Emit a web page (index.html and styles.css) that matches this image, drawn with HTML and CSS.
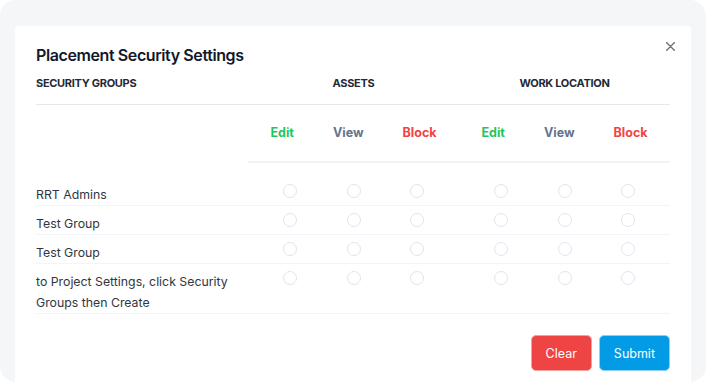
FILE: index.html
```html
<!DOCTYPE html>
<html lang="en">
<head>
<meta charset="utf-8">
<title>Placement Security Settings</title>
<link rel="stylesheet" href="styles.css">
</head>
<body>
<div class="backdrop">
  <div class="modal">
    <button class="close" aria-label="Close">
      <svg width="9" height="9" viewBox="0 0 9 9"><path d="M0.5 0.5 L8.5 8.5 M8.5 0.5 L0.5 8.5" stroke="#6b7280" stroke-width="1.4" stroke-linecap="round" fill="none"/></svg>
    </button>
    <h1 class="title">Placement Security Settings</h1>

    <div class="grid head">
      <div class="head-cell left">SECURITY GROUPS</div>
      <div class="head-cell">ASSETS</div>
      <div class="head-cell">WORK LOCATION</div>
    </div>

    <div class="grid sub">
      <div></div>
      <div class="sub-group">
        <span class="edit">Edit</span><span class="view">View</span><span class="block">Block</span>
      </div>
      <div class="sub-group">
        <span class="edit">Edit</span><span class="view">View</span><span class="block">Block</span>
      </div>
    </div>

    <div class="rows">
      <div class="grid row">
        <div class="name">RRT Admins</div>
        <div class="radios"><input type="radio" name="a1"><input type="radio" name="a1"><input type="radio" name="a1"></div>
        <div class="radios"><input type="radio" name="w1"><input type="radio" name="w1"><input type="radio" name="w1"></div>
      </div>
      <div class="grid row">
        <div class="name">Test Group</div>
        <div class="radios"><input type="radio" name="a2"><input type="radio" name="a2"><input type="radio" name="a2"></div>
        <div class="radios"><input type="radio" name="w2"><input type="radio" name="w2"><input type="radio" name="w2"></div>
      </div>
      <div class="grid row">
        <div class="name">Test Group</div>
        <div class="radios"><input type="radio" name="a3"><input type="radio" name="a3"><input type="radio" name="a3"></div>
        <div class="radios"><input type="radio" name="w3"><input type="radio" name="w3"><input type="radio" name="w3"></div>
      </div>
      <div class="grid row">
        <div class="name">to Project Settings, click Security Groups then Create</div>
        <div class="radios"><input type="radio" name="a4"><input type="radio" name="a4"><input type="radio" name="a4"></div>
        <div class="radios"><input type="radio" name="w4"><input type="radio" name="w4"><input type="radio" name="w4"></div>
      </div>
    </div>

    <div class="actions">
      <button class="btn btn-clear">Clear</button>
      <button class="btn btn-submit">Submit</button>
    </div>
  </div>
</div>
</body>
</html>
```

FILE: styles.css
```css
* { box-sizing: border-box; }

html, body {
  margin: 0;
  padding: 0;
  background: #ffffff;
  font-family: Inter, "Noto Sans", "Liberation Sans", sans-serif;
}

.backdrop {
  height: 382px;
  background: #f5f6f8;
  border-radius: 16px;
  padding: 26px 15px 0;
  overflow: hidden;
}

.modal {
  position: relative;
  background: #ffffff;
  border-radius: 3px;
  padding: 17px 21px 40px;
  min-height: 400px;
}

.close {
  position: absolute;
  top: 16px;
  right: 16px;
  width: 9px;
  height: 9px;
  padding: 0;
  border: 0;
  background: none;
  display: flex;
}

.title {
  margin: 0;
  font-size: 16px;
  line-height: 24px;
  font-weight: 600;
  letter-spacing: -0.4px;
  color: #111827;
}

.grid {
  display: grid;
  grid-template-columns: 212px 1fr 1fr;
}

.head {
  padding: 8px 0 13px;
  border-bottom: 1px solid #e5e7eb;
}

.head-cell {
  font-size: 11px;
  line-height: 16px;
  font-weight: 700;
  letter-spacing: -0.3px;
  color: #1f2937;
  text-align: center;
}

.head-cell.left { text-align: left; }

.sub > .sub-group {
  display: flex;
  justify-content: center;
  gap: 39px;
  padding: 20px 0;
  border-bottom: 2px solid #f0f2f6;
  font-size: 12.5px;
  line-height: 16px;
  font-weight: 700;
}

.edit { color: #22c55e; }
.view { color: #64748b; }
.block { color: #ef4444; }

.rows { margin-top: 14px; }

.row {
  padding-top: 7px;
  border-bottom: 1px solid #f1f4f8;
}

.name {
  font-size: 12.3px;
  line-height: 21px;
  color: #2f3642;
  padding-right: 10px;
}

.radios {
  display: flex;
  justify-content: center;
  align-items: flex-start;
  gap: 49.5px;
}

.radios input {
  appearance: none;
  -webkit-appearance: none;
  width: 14px;
  height: 14px;
  margin: 0;
  border: 1px solid #dfe5ee;
  border-radius: 50%;
  background: #fff;
}

.actions {
  display: flex;
  justify-content: flex-end;
  gap: 7px;
  margin-top: 21px;
}

.btn {
  height: 36px;
  padding: 0 14px;
  border-radius: 5px;
  font-family: inherit;
  font-size: 12.5px;
  color: #ffffff;
  border: 1px solid transparent;
}

.btn-clear { background: #ef4444; border-color: #f2a0a0; }
.btn-submit { background: #039be5; border-color: #8fd0f2; }
```
